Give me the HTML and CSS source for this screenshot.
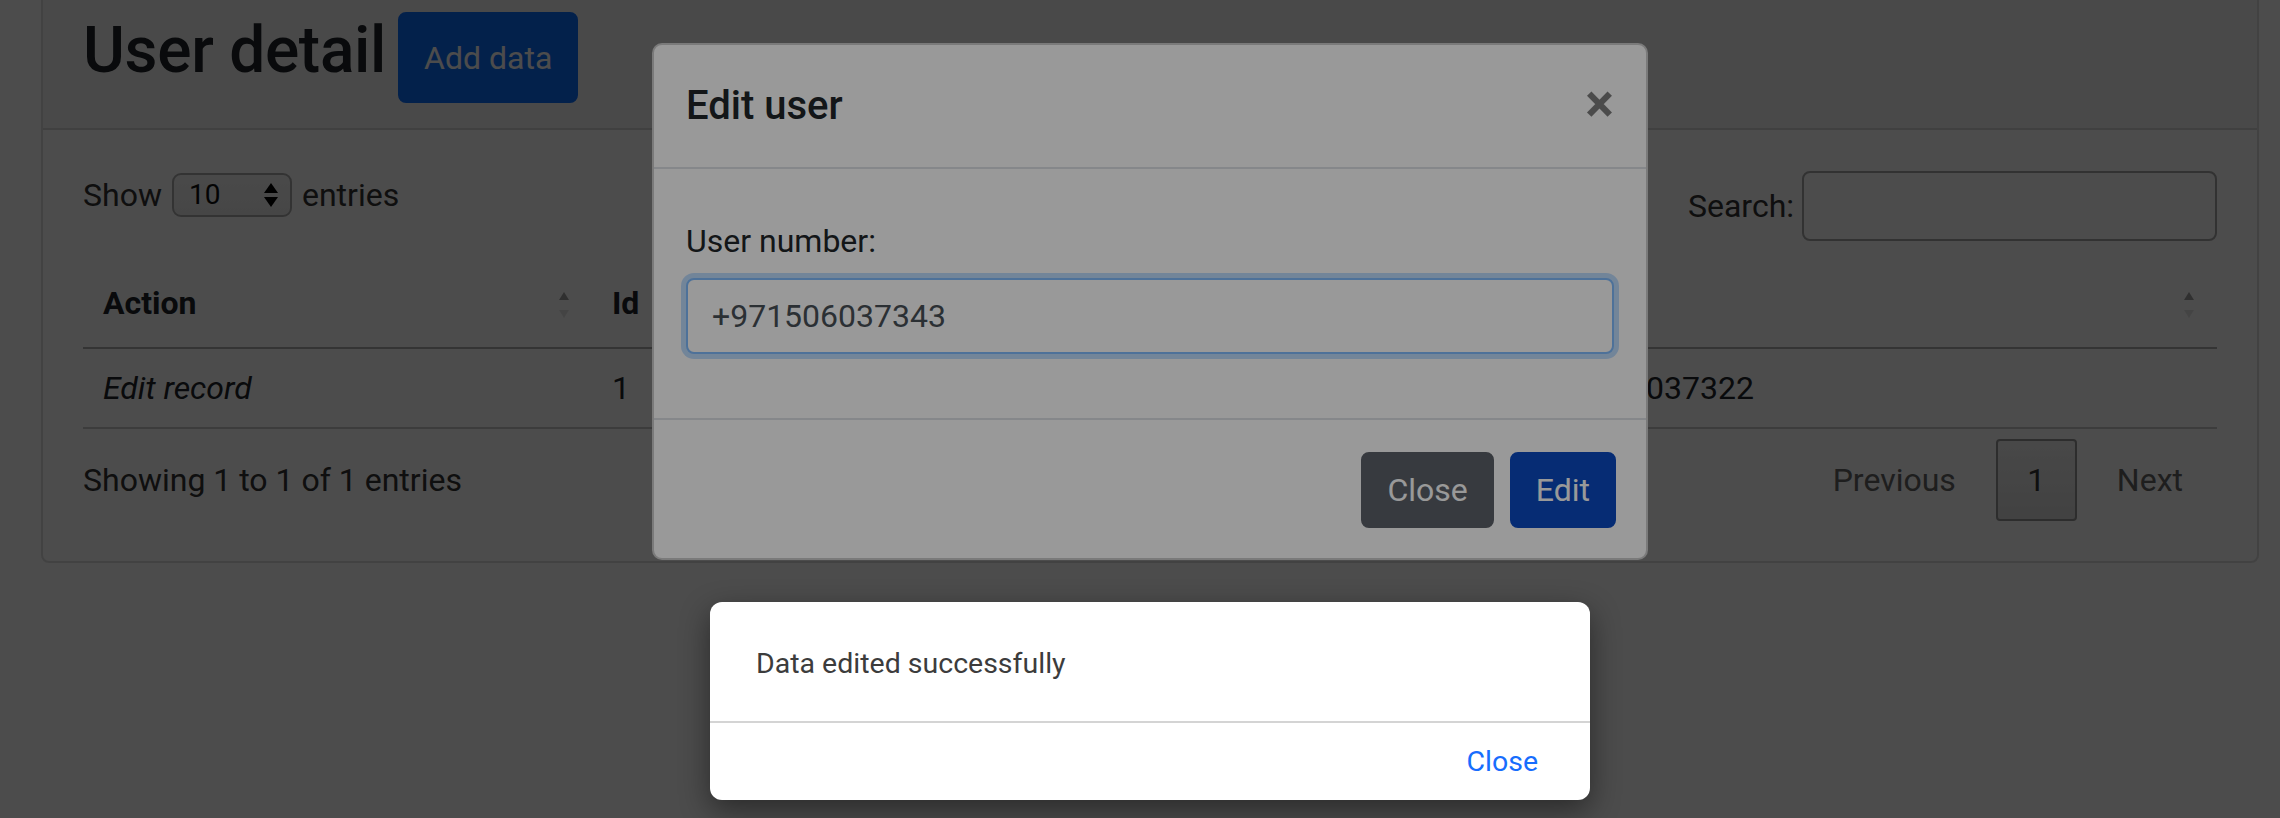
FILE: index.html
```html
<!DOCTYPE html>
<html lang="en">
<head>
<meta charset="utf-8">
<title>User detail</title>
<link rel="stylesheet" href="styles.css">
</head>
<body>
  <div class="page">
    <div class="card">
      <div class="card-header">
        <h2 class="title">User detail</h2>
        <button class="btn btn-primary btn-add">Add data</button>
      </div>
      <div class="card-body">
        <div class="dt-top">
          <div class="dt-length">
            <span>Show</span>
            <span class="select">
              <span class="select-value">10</span>
              <svg class="select-arrows" width="14" height="24" viewBox="0 0 14 24"><polygon points="7,0 14,10 0,10" fill="#000"/><polygon points="0,14 14,14 7,24" fill="#000"/></svg>
            </span>
            <span>entries</span>
          </div>
          <div class="dt-filter">
            <span>Search:</span>
            <input class="search-input" type="text" aria-label="Search">
          </div>
        </div>
        <table class="dt-table">
          <colgroup>
            <col class="col-action">
            <col class="col-id">
            <col class="col-number">
          </colgroup>
          <thead>
            <tr>
              <th>Action<span class="sort"><svg width="10" height="26" viewBox="0 0 10 26"><polygon points="5,0 10,8 0,8" fill="rgba(0,0,0,0.37)"/><polygon points="0,18 10,18 5,26" fill="rgba(0,0,0,0.1)"/></svg></span></th>
              <th>Id<span class="sort"><svg width="10" height="26" viewBox="0 0 10 26"><polygon points="5,0 10,8 0,8" fill="rgba(0,0,0,0.37)"/><polygon points="0,18 10,18 5,26" fill="rgba(0,0,0,0.1)"/></svg></span></th>
              <th>Phone<span class="sort"><svg width="10" height="26" viewBox="0 0 10 26"><polygon points="5,0 10,8 0,8" fill="rgba(0,0,0,0.37)"/><polygon points="0,18 10,18 5,26" fill="rgba(0,0,0,0.1)"/></svg></span></th>
            </tr>
          </thead>
          <tbody>
            <tr>
              <td class="action-cell">Edit record</td>
              <td>1</td>
              <td>+971506037322</td>
            </tr>
          </tbody>
        </table>
        <div class="dt-bottom">
          <div class="dt-info">Showing 1 to 1 of 1 entries</div>
          <div class="pagination">
            <span class="pg-btn disabled">Previous</span>
            <span class="pg-btn current">1</span>
            <span class="pg-btn disabled">Next</span>
          </div>
        </div>
      </div>
    </div>
  </div>

  <div class="backdrop backdrop-first"></div>

  <div class="modal">
    <div class="modal-header">
      <h5 class="modal-title">Edit user</h5>
      <span class="close">×</span>
    </div>
    <div class="modal-body">
      <div class="form-group">
        <label class="form-label" for="num">User number:</label>
        <input id="num" class="form-control" type="text" value="+971506037343">
      </div>
    </div>
    <div class="modal-footer">
      <button class="btn btn-secondary">Close</button>
      <button class="btn btn-edit">Edit</button>
    </div>
  </div>

  <div class="backdrop backdrop-second"></div>

  <div class="alert">
    <div class="alert-body">Data edited successfully</div>
    <div class="alert-footer"><span class="alert-close">Close</span></div>
  </div>
</body>
</html>
```

FILE: styles.css
```css
* {
  box-sizing: border-box;
}

html,
body {
  margin: 0;
}

body {
  position: relative;
  width: 2280px;
  height: 818px;
  overflow: hidden;
  background: #fff;
  color: #212529;
  font-family: Roboto, "Liberation Sans", Arial, sans-serif;
  font-size: 32px;
  line-height: 48px;
}

.page {
  padding: 0 21px 0 41px;
  margin-top: -15px;
}

.card {
  background: #fff;
  border: 2px solid rgba(0, 0, 0, 0.125);
  border-radius: 8px;
}

.card-header {
  display: flex;
  align-items: flex-start;
  padding: 24px 40px;
  background: rgba(0, 0, 0, 0.03);
  border-bottom: 2px solid rgba(0, 0, 0, 0.125);
}

.title {
  margin: 0 0 16px;
  padding-top: 3px;
  height: 77px;
  font-size: 64px;
  line-height: 74px;
  font-weight: 500;
  letter-spacing: -0.3px;
}

.btn {
  font-family: inherit;
  font-size: 32px;
  line-height: 48px;
  border: 2px solid transparent;
  border-radius: 8px;
  padding: 0 24px;
  color: #fff;
}

.btn-add {
  margin: 1px 0 0 12px;
  height: 91px;
  background: #0d6efd;
  border-color: #0d6efd;
}

.card-body {
  padding: 40px;
}

.dt-top {
  display: flex;
  justify-content: space-between;
  align-items: flex-start;
  color: #333;
}

.dt-length {
  display: flex;
  align-items: center;
  gap: 10px;
  margin-top: 3px;
  line-height: 44px;
}

.select {
  display: flex;
  align-items: center;
  justify-content: space-between;
  width: 120px;
  height: 44px;
  padding: 0 12px 0 15px;
  border: 2px solid #adadad;
  border-radius: 9px;
  background: linear-gradient(#f6f6f6, #ececec);
  color: #111;
  font-size: 28px;
}

.dt-filter {
  display: flex;
  align-items: center;
  gap: 8px;
  margin-top: 1px;
}

.search-input {
  width: 415px;
  height: 70px;
  border: 2px solid #a8a8a8;
  border-radius: 8px;
  background: #fff;
  font-size: 32px;
}

.dt-table {
  width: 100%;
  margin-top: 18px;
  border-collapse: collapse;
  table-layout: fixed;
}

.col-action {
  width: 509px;
}

.col-id {
  width: 908px;
}

.dt-table th {
  position: relative;
  padding: 20px 36px 20px 20px;
  text-align: left;
  font-weight: 700;
  border-bottom: 2px solid #b0b0b0;
  white-space: nowrap;
}

.sort {
  position: absolute;
  right: 23px;
  top: 33px;
  width: 10px;
  height: 26px;
  line-height: 0;
}

.dt-table td {
  padding: 15px 20px;
  border-bottom: 2px solid #c8c8c8;
  white-space: nowrap;
}

.action-cell {
  font-style: italic;
}

.dt-bottom {
  display: flex;
  justify-content: space-between;
  align-items: center;
  margin-top: 10px;
  color: #333;
}

.pagination {
  display: flex;
}

.pg-btn {
  padding: 15px 32px;
  border: 2px solid transparent;
  border-radius: 4px;
  margin-left: 6px;
}

.pg-btn.disabled {
  color: #666;
}

.pg-btn.current {
  width: 81px;
  padding: 15px 0;
  text-align: center;
  color: #333;
  border-color: #979797;
  background: linear-gradient(#f2f2f2, #dcdcdc);
}

/* overlays */
.backdrop {
  position: absolute;
  inset: 0;
}

.backdrop-first {
  background: rgba(0, 0, 0, 0.5);
  z-index: 1;
}

.backdrop-second {
  background: rgba(0, 0, 0, 0.4);
  z-index: 3;
}

.modal {
  position: absolute;
  left: 652px;
  top: 43px;
  width: 996px;
  z-index: 2;
  background: #fff;
  border: 2px solid rgba(0, 0, 0, 0.2);
  border-radius: 10px;
}

.modal-header {
  display: flex;
  justify-content: space-between;
  align-items: flex-start;
  padding: 31px 32px;
  border-bottom: 2px solid #dee2e6;
}

.modal-title {
  margin: 0;
  font-size: 40px;
  line-height: 60px;
  font-weight: 500;
}

.close {
  font-size: 54px;
  line-height: 54px;
  font-weight: 700;
  color: #000;
  opacity: 0.5;
  text-shadow: 0 2px 0 #fff;
  margin-top: 1px;
}

.modal-body {
  padding: 32px;
}

.form-group {
  padding-top: 16px;
  margin-bottom: 32px;
}

.form-label {
  display: block;
  margin-bottom: 13px;
}

.form-control {
  display: block;
  width: 100%;
  height: 76px;
  padding: 12px 24px;
  font-family: inherit;
  font-size: 32px;
  line-height: 48px;
  color: #495057;
  background: #fff;
  border: 2px solid #80bdff;
  border-radius: 8px;
  box-shadow: 0 0 0 5px rgba(0, 123, 255, 0.25);
  outline: none;
}

.modal-footer {
  display: flex;
  justify-content: flex-end;
  padding: 24px 22px 22px;
  border-top: 2px solid #dee2e6;
}

.modal-footer .btn {
  height: 76px;
  margin: 8px;
}

.btn-secondary {
  background: #5c6169;
  border-color: #5c6169;
}

.btn-edit {
  background: #0a4ac2;
  border-color: #0a4ac2;
}

.alert {
  position: absolute;
  left: 710px;
  top: 602px;
  width: 880px;
  height: 198px;
  z-index: 4;
  background: #fff;
  border-radius: 12px;
  box-shadow: 0 10px 30px rgba(0, 0, 0, 0.45);
  display: flex;
  flex-direction: column;
}

.alert-body {
  display: flex;
  align-items: center;
  height: 119px;
  padding: 4px 46px 0;
  font-size: 28.5px;
  color: #3c3c3c;
}

.alert-footer {
  flex: 1;
  display: flex;
  justify-content: flex-end;
  align-items: center;
  padding-right: 52px;
  border-top: 2px solid #d4d4d4;
}

.alert-close {
  font-size: 28.5px;
  color: #176dfd;
}
```
